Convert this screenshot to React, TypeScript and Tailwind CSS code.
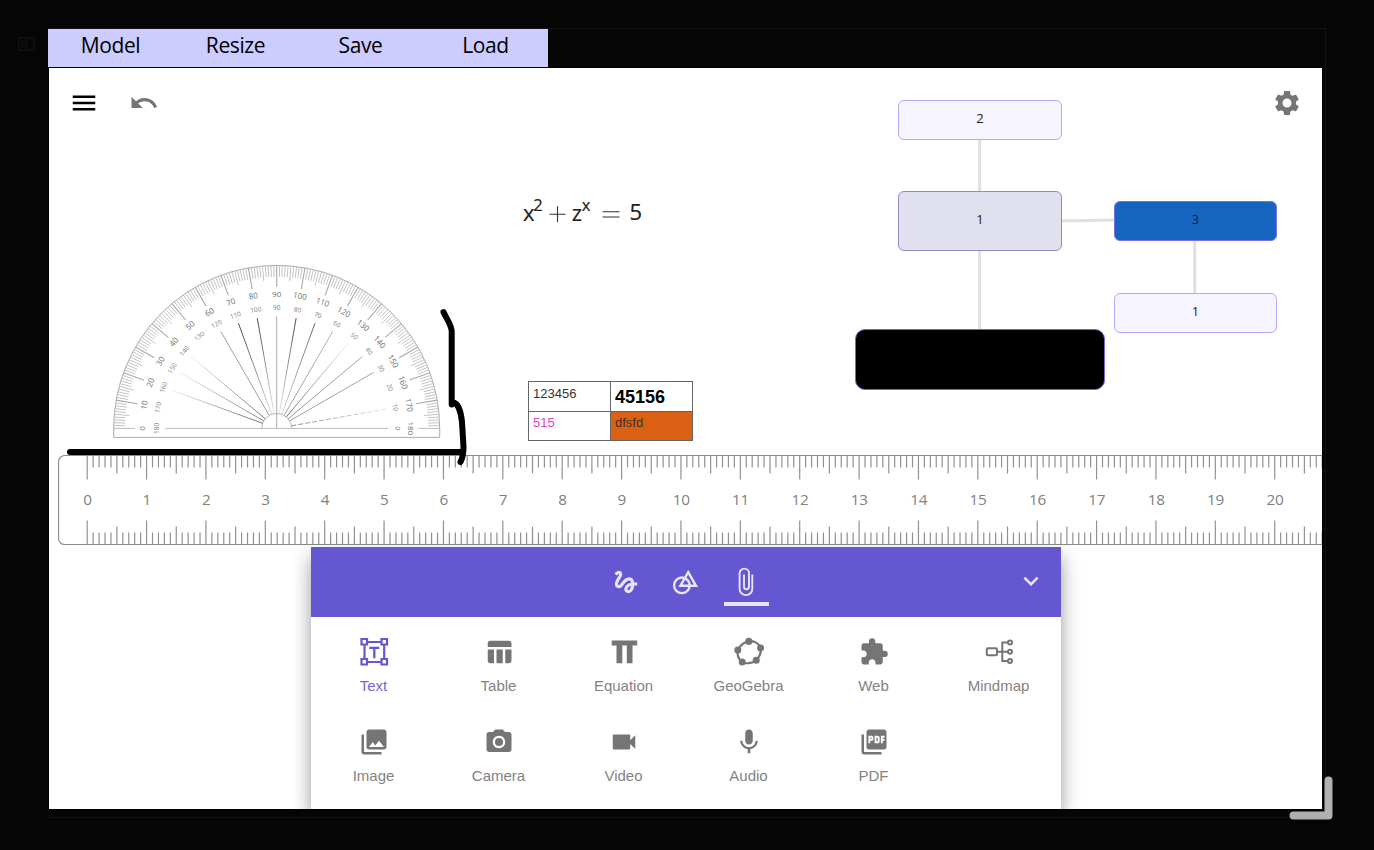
import React from "react";
import {
  MdCameraAlt,
  MdExpandMore,
  MdExtension,
  MdGesture,
  MdMenu,
  MdMic,
  MdPhotoLibrary,
  MdPictureAsPdf,
  MdSettings,
  MdTableChart,
  MdUndo,
  MdVideocam,
} from "react-icons/md";

const CX = 227.7;
const CY = 360.4;
const R = 163;

function polar(deg: number, r: number) {
  const a = (deg * Math.PI) / 180;
  return { x: CX - r * Math.cos(a), y: CY - r * Math.sin(a) };
}

type Ray = { deg: number; near: number; far: number; dash?: string };

const rays: Ray[] = [
  { deg: 20, near: 0.75, far: 0.08 },
  { deg: 30, near: 0.65, far: 0.08 },
  { deg: 40, near: 0.7, far: 0.08 },
  { deg: 60, near: 0.5, far: 0.5 },
  { deg: 70, near: 0.2, far: 0.95 },
  { deg: 80, near: 0.12, far: 0.95 },
  { deg: 90, near: 0.4, far: 0.4 },
  { deg: 100, near: 0.12, far: 0.95 },
  { deg: 110, near: 0.2, far: 0.8 },
  { deg: 120, near: 0.5, far: 0.4 },
  { deg: 130, near: 0.75, far: 0.08 },
  { deg: 140, near: 0.55, far: 0.45 },
  { deg: 150, near: 0.5, far: 0.45 },
  { deg: 170, near: 0.6, far: 0.12, dash: "5 2" },
];

function Protractor() {
  const ticks = [];
  for (let d = 1; d < 180; d++) {
    const len = d % 10 === 0 ? 21.5 : d % 5 === 0 ? 15 : 11.5;
    const a = polar(d, R);
    const b = polar(d, R - len);
    ticks.push(
      <line key={d} x1={a.x} y1={a.y} x2={b.x} y2={b.y} stroke={d % 10 === 0 ? "#a8a8a8" : "#c4c4c4"} strokeWidth={d % 10 === 0 ? 1.1 : 1} />,
    );
  }
  const labels = [];
  for (let d = 0; d <= 180; d += 10) {
    const o = polar(d, 134.5);
    const i = polar(d, 120.5);
    labels.push(
      <g key={d} textAnchor="middle">
        <text transform={`translate(${o.x} ${o.y}) rotate(${d - 90})`} y={2.9} fontSize={8} fill="#6c6c6c">{d}</text>
        <text transform={`translate(${i.x} ${i.y}) rotate(${d - 90})`} y={2.3} fontSize={6.5} fill="#808080">{180 - d}</text>
      </g>,
    );
  }
  return (
    <g fontFamily="'Open Sans', 'Noto Sans', sans-serif">
      <path d={`M${CX - R} ${CY}A${R} ${R} 0 0 1 ${CX + R} ${CY}V369.4H${CX - R}Z`} fill="none" stroke="#aaa" strokeWidth={1} />
      <path d={`M${CX - R} ${CY}h21M${CX - 111.5} ${CY}h223M${CX + R} ${CY}h-21`} stroke="#bbb" strokeWidth={1} />
      <path d={`M${CX - 15} ${CY}a15 15 0 0 1 30 0`} fill="none" stroke="#aaa" strokeWidth={0.8} />
      {ticks}
      {rays.map((r) => {
        const a = polar(r.deg, 15);
        const b = polar(r.deg, 112);
        return (
          <g key={r.deg}>
            <linearGradient id={`ray${r.deg}`} gradientUnits="userSpaceOnUse" x1={a.x} y1={a.y} x2={b.x} y2={b.y}>
              <stop offset="0" stopColor="#333" stopOpacity={r.near} />
              <stop offset="1" stopColor="#333" stopOpacity={r.far} />
            </linearGradient>
            {r.deg === 90 ? (
              <line x1={CX} y1={CY} x2={b.x} y2={b.y} stroke="#aaa" strokeWidth={1} />
            ) : (
              <line x1={a.x} y1={a.y} x2={b.x} y2={b.y} stroke={`url(#ray${r.deg})`} strokeWidth={0.95} strokeDasharray={r.dash} />
            )}
          </g>
        );
      })}
      {labels}
    </g>
  );
}

function Ruler() {
  const items = [];
  for (let i = 0; i <= 208; i++) {
    const x = 38.2 + i * 5.9375;
    const len = i % 10 === 0 ? 24 : i % 5 === 0 ? 18 : 12;
    items.push(
      <path key={i} d={`M${x} 387.5v${len}M${x} 476.5v${-len}`} stroke="#929292" strokeWidth={1.2} />,
    );
    if (i % 10 === 0) {
      items.push(
        <text key={`t${i}`} x={x + 0.2} y={437} textAnchor="middle" fontSize={15.3} letterSpacing={-0.3} fill="#808080">{i / 10}</text>,
      );
    }
  }
  return (
    <g fontFamily="'Open Sans', 'Noto Sans', sans-serif">
      <rect x={9.6} y={387.5} width={1300} height={89} rx={6} fill="#fff" stroke="#8a8a8a" strokeWidth={1.1} />
      {items}
    </g>
  );
}

function Drawing() {
  return (
    <svg className="absolute inset-0" width={1273} height={741} viewBox="0 0 1273 741">
      <Protractor />
      <Ruler />
      <g fill="none" stroke="#000" strokeWidth={6} strokeLinecap="round" strokeLinejoin="round">
        <path d="M21 384H412" />
        <path d="M394.5 244C397 250 402 256 402.7 263V336.5L404 334.5C409 335 412 344 413 354L414.5 379Q414.5 388 411.500 394" />
      </g>
      <g fill="none" stroke="#e0e0e0" strokeWidth={3}>
        <path d="M930.6 71V124M930.6 182V262M1145.7 172V226M1012 152.7C1035 153 1042 152 1066 152" />
      </g>
      <g fontFamily="'Open Sans', 'Noto Sans', sans-serif" fill="#222" stroke="#222" strokeWidth={0.2}>
        <text x={474} y={152.5} fontSize={22}>x</text>
        <text x={484.3} y={143.3} fontSize={16.5}>2</text>
        <text x={522.7} y={152.5} fontSize={22}>z</text>
        <text x={532.7} y={143.3} fontSize={16.5}>x</text>
        <text x={580.5} y={152} fontSize={22}>5</text>
      </g>
      <path d="M500.500 146.300h16M508.500 138.300v16M553.500 143.700h17M553.500 149h17" stroke="#333" strokeWidth={1.1} />
    </svg>
  );
}

function Node({ className, label }: { className: string; label?: string }) {
  return (
    <div className={`absolute flex justify-center border font-['Open_Sans','Noto_Sans',sans-serif] text-[13px] leading-[18px] text-[#222] ${className}`}>
      {label}
    </div>
  );
}

function ShapesIcon() {
  return (
    <svg width="30" height="30" viewBox="0 0 30 30" fill="none" stroke="currentColor" strokeWidth="2.4">
      <circle cx="10.9" cy="18.3" r="7.8" />
      <path d="M17.2 5.2L25 18.8H9.4Z" />
    </svg>
  );
}

function ClipIcon() {
  return (
    <svg width="30" height="30" viewBox="0 0 30 30" fill="none" stroke="currentColor" strokeWidth="1.9">
      <path d="M21.300 7.500V21.800a6.350 6.350 0 0 1-12.700 0V6.300a4.700 4.700 0 0 1 9.400 0V19.700a2.500 2.500 0 0 1-5 0V7.500" />
    </svg>
  );
}

function TextIcon() {
  return (
    <svg width="30" height="30" viewBox="0 0 30 30" fill="none" stroke="currentColor" strokeWidth="2.200">
      <path d="M2.500 2h5.500v5.500H2.500zM22.500 2H28v5.500h-5.500zM2.500 22H8v5.500H2.500zM22.500 22H28v5.500h-5.500zM8 5h14.500M8 25h14.500M5.500 8v14M25.200 8v14" />
      <path d="M10.300 10.800h10M15.300 11v10.200" strokeWidth="2.300" />
    </svg>
  );
}

function EquationIcon() {
  return (
    <svg width="30" height="30" viewBox="0 0 30 30" fill="currentColor">
      <path d="M2.700 3.600H28.200V8.500H23.500V26.300H17.800V8.500H13.300V26.300H7.500V8.500H2.700Z" />
    </svg>
  );
}

function GeoGebraIcon() {
  return (
    <svg width="30" height="30" viewBox="0 0 30 30" fill="currentColor">
      <path d="M14.800 4.300C19.500 3.700 24.500 6 26.800 10.800C27.300 16.500 25 20.500 22.200 23.300C18 26.200 12 27 8.200 25.500C4.300 22 2.800 17.500 3.800 12.800C6.500 8 10 5 14.800 4.300Z" fill="none" stroke="currentColor" strokeWidth="2.200" />
      <circle cx="14.800" cy="4.300" r="3.600" />
      <circle cx="26.600" cy="11" r="3.500" />
      <circle cx="22.200" cy="23.300" r="3.500" />
      <circle cx="8.200" cy="25" r="3.500" />
      <circle cx="3.800" cy="13" r="3.500" />
    </svg>
  );
}

function MindmapIcon() {
  return (
    <svg width="30" height="30" viewBox="0 0 30 30" fill="none" stroke="currentColor" strokeWidth="2">
      <rect x="2.800" y="11.300" width="10.200" height="7" rx="1" />
      <path d="M13 14.800H24M24 5.500H18.300V24H24" />
      <circle cx="26" cy="5.500" r="2" />
      <circle cx="26" cy="14.800" r="2" />
      <circle cx="26" cy="24" r="2" />
    </svg>
  );
}

const tools = [
  { label: "Text", icon: <TextIcon /> },
  { label: "Table", icon: <MdTableChart size={30} /> },
  { label: "Equation", icon: <EquationIcon /> },
  { label: "GeoGebra", icon: <GeoGebraIcon /> },
  { label: "Web", icon: <MdExtension size={30} /> },
  { label: "Mindmap", icon: <MindmapIcon /> },
  { label: "Image", icon: <MdPhotoLibrary size={30} /> },
  { label: "Camera", icon: <MdCameraAlt size={30} /> },
  { label: "Video", icon: <MdVideocam size={30} /> },
  { label: "Audio", icon: <MdMic size={30} /> },
  { label: "PDF", icon: <MdPictureAsPdf size={30} /> },
];

function ToolPanel() {
  return (
    <section className="relative ml-[262px] h-[262px] w-[750px] bg-white shadow-[0_10px_18px_rgba(0,0,0,0.4)]">
      <div className="grid h-[70px] grid-cols-[1fr_180px_1fr] bg-[#6557d2] text-[#e8e4fa]">
        <div className="col-start-2 flex">
          <button className="flex h-[70px] w-[60px] items-center justify-center"><MdGesture size={30} /></button>
          <button className="flex h-[70px] w-[60px] items-center justify-center"><ShapesIcon /></button>
          <button className="flex h-[59px] w-[60px] flex-col items-center justify-end">
            <ClipIcon />
            <span className="mt-[5px] h-1 w-[45px] bg-[#e8e4fa]" />
          </button>
        </div>
        <button className="flex items-center justify-end pb-0.5 pr-[15px]"><MdExpandMore size={30} /></button>
      </div>
      <div className="grid grid-cols-6 pt-5 text-[#757575]">
        {tools.map((t) => (
          <button key={t.label} className={`flex h-[90px] flex-col items-center ${t.label === "Text" ? "text-[#6557d2]" : ""}`}>
            <span className="h-[30px]">{t.icon}</span>
            <span className="mt-2 font-['Liberation_Sans',Arial,sans-serif] text-[15px] leading-[22px] opacity-90">{t.label}</span>
          </button>
        ))}
      </div>
    </section>
  );
}

export default function App() {
  return (
    <div className="relative flex h-[850px] w-[1374px] overflow-hidden bg-[#050505]">
      <aside className="w-12 pl-[18px] pt-[37px] text-[#111]">
        <svg width="17" height="14" viewBox="0 0 17 14" fill="none" stroke="currentColor" strokeWidth="1.500">
          <rect x="0.800" y="0.800" width="15.400" height="12.400" rx="1" />
          <path d="M8.500 1v12M3 4.500h3.500M3 7h3.500M3 9.500h3.500" />
        </svg>
      </aside>
      <main className="mt-7 h-[790px] w-[1278px] border-y border-r border-[#121212]">
        <nav className="grid h-[38px] w-[500px] grid-cols-4 bg-[#ccccff] text-center font-['Open_Sans','Noto_Sans',sans-serif] text-[21px] leading-[33px] tracking-[-0.4px] text-black">
          {["Model", "Resize", "Save", "Load"].map((m) => (
            <button key={m} className="flex justify-center">{m}</button>
          ))}
        </nav>
        <div className="h-[743px] w-[1275px] border border-black">
          <div className="relative flex h-[741px] flex-col justify-between overflow-hidden bg-white">
            <Drawing />
            <Node className="left-[849px] top-[32px] h-10 w-[164px] rounded-md border-[#b8a8fa] bg-[#f6f4ff] pt-2" label="2" />
            <Node className="left-[849px] top-[123px] h-[60px] w-[164px] rounded-md border-[#9489c8] bg-[#e1e0ef] pt-[18px]" label="1" />
            <Node className="left-[1065px] top-[133px] h-10 w-[163px] rounded-md border-[#7b70e0] bg-[#1565c0] pt-2" label="3" />
            <Node className="left-[1065px] top-[225px] h-10 w-[163px] rounded-md border-[#b8a8fa] bg-[#f6f4ff] pt-2" label="1" />
            <Node className="left-[806px] top-[261px] h-[61px] w-[250px] rounded-[10px] border-[#7864d2] bg-black" />
            <table className="absolute left-[479px] top-[313px] w-[165px] table-fixed border-collapse font-['Liberation_Sans',Arial,sans-serif] text-[13px] leading-4 text-[#333]">
              <tbody>
                <tr className="h-[29.500px] align-top">
                  <td className="border border-[#666] px-1 pt-1">123456</td>
                  <td className="border border-[#666] px-1 pt-[5px] text-[18px] font-bold leading-5 text-black">45156</td>
                </tr>
                <tr className="h-[29.500px] align-top">
                  <td className="border border-[#666] px-1 pt-[3px] text-[#e03fbd]">515</td>
                  <td className="border border-[#666] bg-[#dc6014] px-1 pt-[3px]">dfsfd</td>
                </tr>
              </tbody>
            </table>
            <header className="relative flex h-[70px] items-center justify-between px-5 text-[#757575]">
              <div className="flex gap-[30px]">
                <button className="text-black"><MdMenu size={30} /></button>
                <button><MdUndo size={30} /></button>
              </div>
              <button><MdSettings size={30} /></button>
            </header>
            <ToolPanel />
          </div>
        </div>
      </main>
      <svg className="absolute left-[1286px] top-[773px]" width="50" height="50" viewBox="0 0 50 50" fill="none" strokeLinecap="round" strokeLinejoin="round">
        <path d="M42.500 7.500V42.500H7.500" stroke="#b0b0b3" strokeWidth="8" />
      </svg>
    </div>
  );
}
